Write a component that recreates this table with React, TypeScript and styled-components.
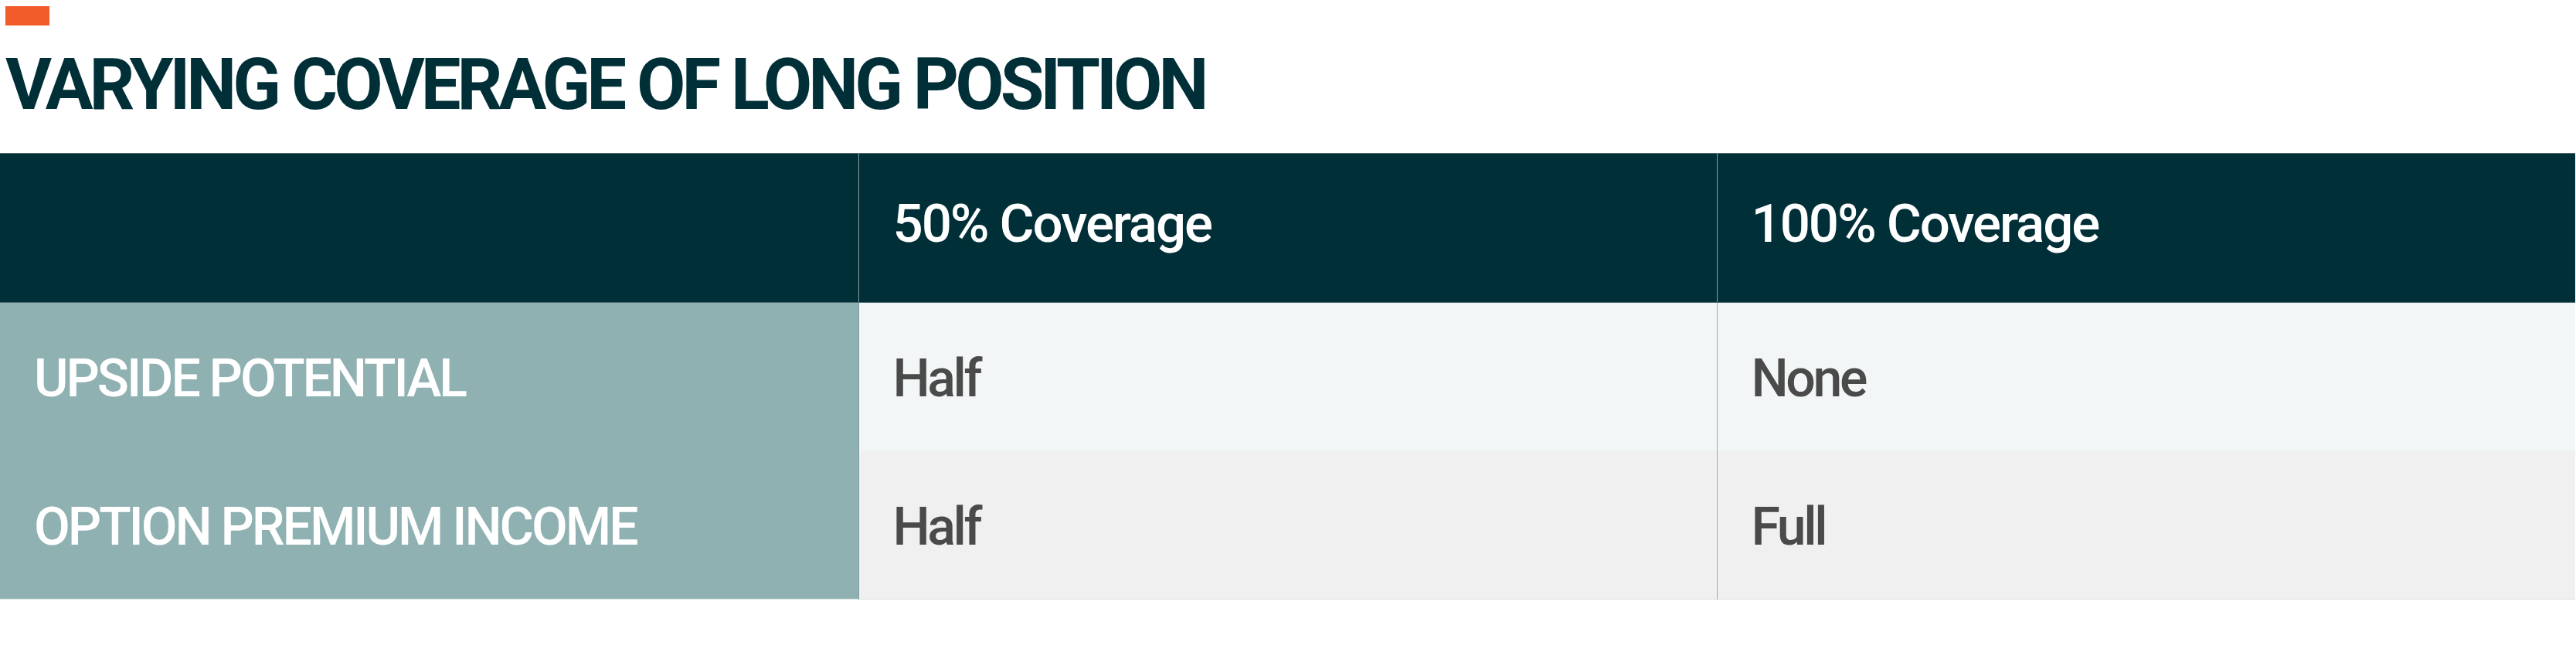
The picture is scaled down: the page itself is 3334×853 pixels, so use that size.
import styled, { createGlobalStyle } from "styled-components";

const GlobalStyle = createGlobalStyle`
    body {
        margin: 0;
        background: #ffffff;
        font-family: Roboto, "Open Sans", sans-serif;
    }
`;

const Wrapper = styled.div`
    width: 3334px;
    padding-top: 8px;
`;

const Accent = styled.div`
    width: 57px;
    height: 25px;
    margin-left: 7px;
    background: #f15a29;
`;

const Title = styled.h2`
    margin: 31px 0 42px 7px;
    font-size: 92px;
    line-height: 1;
    font-weight: 700;
    letter-spacing: -0.054em;
    color: #002f38;
    text-transform: uppercase;
    white-space: nowrap;
`;

const Table = styled.table`
    width: 3333px;
    border-collapse: collapse;
    table-layout: fixed;
    border-top: 1px solid #52686d;
    border-bottom: 1px solid #d9dede;
`;

const HeadCell = styled.th`
    height: 193px;
    padding: 0 44px 12px;
    box-sizing: border-box;
    background: #002f38;
    color: #ffffff;
    font-size: 69px;
    font-weight: 500;
    letter-spacing: -0.03em;
    text-align: left;
    vertical-align: middle;
    border-left: 1px solid #8a9ea2;
    border-bottom: 1px solid #4d6d73;
    &:first-child {
        border-left: none;
    }
`;

const Label = styled.th`
    height: 192px;
    padding: 5px 44px 0;
    box-sizing: border-box;
    background: #8fb1b1;
    color: #ffffff;
    font-size: 68px;
    font-weight: 500;
    letter-spacing: -0.045em;
    text-align: left;
    text-transform: uppercase;
    vertical-align: middle;
    border-right: 1px solid #7f9f9f;
`;

const Cell = styled.td<{ $shade: string }>`
    height: 192px;
    padding: 5px 44px 0;
    box-sizing: border-box;
    background: ${(props) => props.$shade};
    color: #4a4a4a;
    font-size: 68px;
    font-weight: 500;
    letter-spacing: -0.05em;
    vertical-align: middle;
    border-left: 1px solid #a3a8a8;
`;

const rows = [
    { label: "Upside Potential", half: "Half", full: "None", shade: "#f2f6f7" },
    { label: "Option Premium Income", half: "Half", full: "Full", shade: "#f0f0f0" },
];

function App() {
    return (
        <Wrapper>
            <GlobalStyle />
            <Accent />
            <Title>Varying Coverage of Long Position</Title>
            <Table>
                <thead>
                    <tr>
                        <HeadCell />
                        <HeadCell>50% Coverage</HeadCell>
                        <HeadCell>100% Coverage</HeadCell>
                    </tr>
                </thead>
                <tbody>
                    {rows.map((row) => (
                        <tr key={row.label}>
                            <Label>{row.label}</Label>
                            <Cell $shade={row.shade}>{row.half}</Cell>
                            <Cell $shade={row.shade}>{row.full}</Cell>
                        </tr>
                    ))}
                </tbody>
            </Table>
        </Wrapper>
    );
}

export default App;
